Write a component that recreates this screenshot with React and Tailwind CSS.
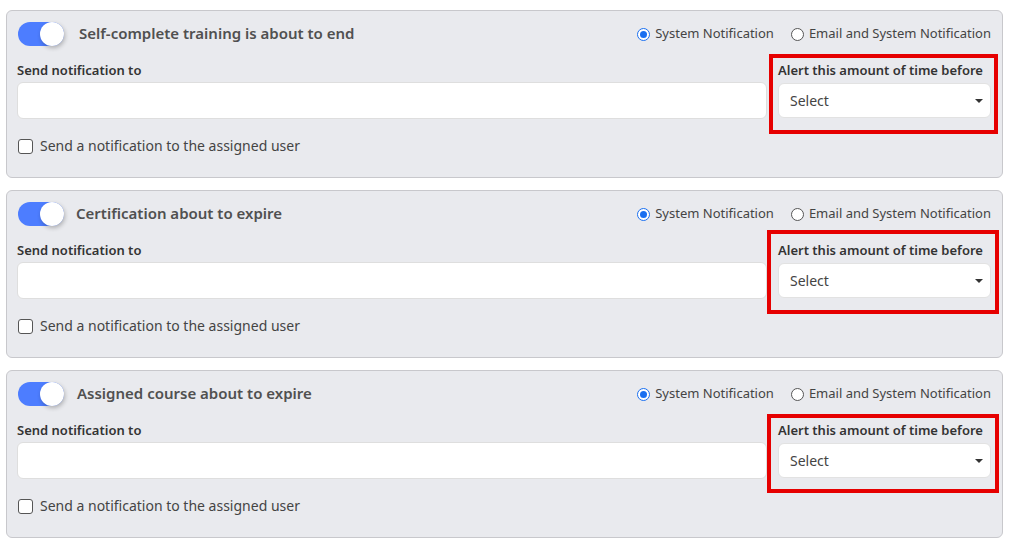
import React, { useState } from "react";

const cards = [
    {
        title: "Self-complete training is about to end",
        titleClass: "ml-[15px]",
        box: "top-[-7px] left-[-9px] right-[-7px] h-[80px]",
    },
    {
        title: "Certification about to expire",
        titleClass: "ml-[12px]",
        box: "top-[-11px] left-[-11px] right-[-8px] h-[84px]",
    },
    {
        title: "Assigned course about to expire",
        titleClass: "ml-[13px]",
        box: "top-[-7px] left-[-11px] right-[-8px] h-[79px]",
    },
];

const Toggle = ({ on, onChange }) => (
    <button
        onClick={onChange}
        className={`relative h-6 w-[46px] rounded-full ml-px ${on ? "bg-[#4d7dff]" : "bg-gray-300"}`}
    >
        <span
            className={`absolute top-0 h-6 w-6 rounded-full bg-white shadow-[1px_2px_4px_rgba(0,0,0,0.25)] ${on ? "left-[22px]" : "left-0"}`}
        />
    </button>
);

const Radio = ({ checked, label, onClick }) => (
    <label onClick={onClick} className="flex items-center gap-[5px] cursor-pointer">
        <span
            className={`flex h-[13px] w-[13px] items-center justify-center rounded-full border ${checked ? "border-[#1a6ff0]" : "border-[#555]"} bg-white`}
        >
            {checked && <span className="h-[7px] w-[7px] rounded-full bg-[#1a6ff0]" />}
        </span>
        <span className="text-[13px] text-[#444]">{label}</span>
    </label>
);

const NotificationCard = ({ card }) => {
    const [on, setOn] = useState(true);
    const [mode, setMode] = useState("system");
    const [assigned, setAssigned] = useState(false);

    return (
        <div className="rounded-md border border-[#c8c8cc] bg-[#e9eaee] pl-[10px] pr-[11px] pt-[11px] pb-[21px]">
            <div className="flex h-6 items-center justify-between">
                <div className="flex items-center">
                    <Toggle on={on} onChange={() => setOn(!on)} />
                    <span className={`${card.titleClass} -translate-y-px text-[15px] font-semibold text-[#505050]`}>{card.title}</span>
                </div>
                <div className="flex items-center gap-[17px]">
                    <Radio checked={mode === "system"} label="System Notification" onClick={() => setMode("system")} />
                    <Radio checked={mode === "email"} label="Email and System Notification" onClick={() => setMode("email")} />
                </div>
            </div>

            <div className="mt-[15px] flex gap-[11px]">
                <div className="flex-1">
                    <div className="mb-[3px] h-[18px] text-[13px] font-semibold leading-[18px] text-[#333]">Send notification to</div>
                    <input className="h-[37px] w-full rounded-md border border-[#dedede] bg-white px-3 outline-none" />
                </div>
                <div className="relative w-[213px]">
                    <div className="mb-[4px] h-[18px] text-[13px] font-semibold leading-[18px] text-[#333]">Alert this amount of time before</div>
                    <div className="flex h-[35px] items-center justify-between rounded-md border border-[#e2e2e2] bg-white pl-[11px] pr-[7px]">
                        <span className="text-[14px] text-[#444]">Select</span>
                        <span className="h-0 w-0 border-x-[4px] border-t-[4px] border-x-transparent border-t-[#333]" />
                    </div>
                    <div className={`pointer-events-none absolute border-4 border-[#e60000] ${card.box}`} />
                </div>
            </div>

            <label className="mt-[17px] flex h-5 items-center gap-[7px] cursor-pointer" onClick={() => setAssigned(!assigned)}>
                <span className="ml-px h-[15px] w-[15px] rounded-[3px] border border-[#555] bg-white" />
                <span className="-translate-y-px text-[14px] text-[#444]">Send a notification to the assigned user</span>
            </label>
        </div>
    );
};

export default function App() {
    return (
        <div className="min-h-screen bg-white px-[6px] pt-[10px] font-['Noto_Sans','Open_Sans',sans-serif] w-[1009px]">
            <div className="flex flex-col gap-3">
                {cards.map((c) => (
                    <NotificationCard key={c.title} card={c} />
                ))}
            </div>
        </div>
    );
}
